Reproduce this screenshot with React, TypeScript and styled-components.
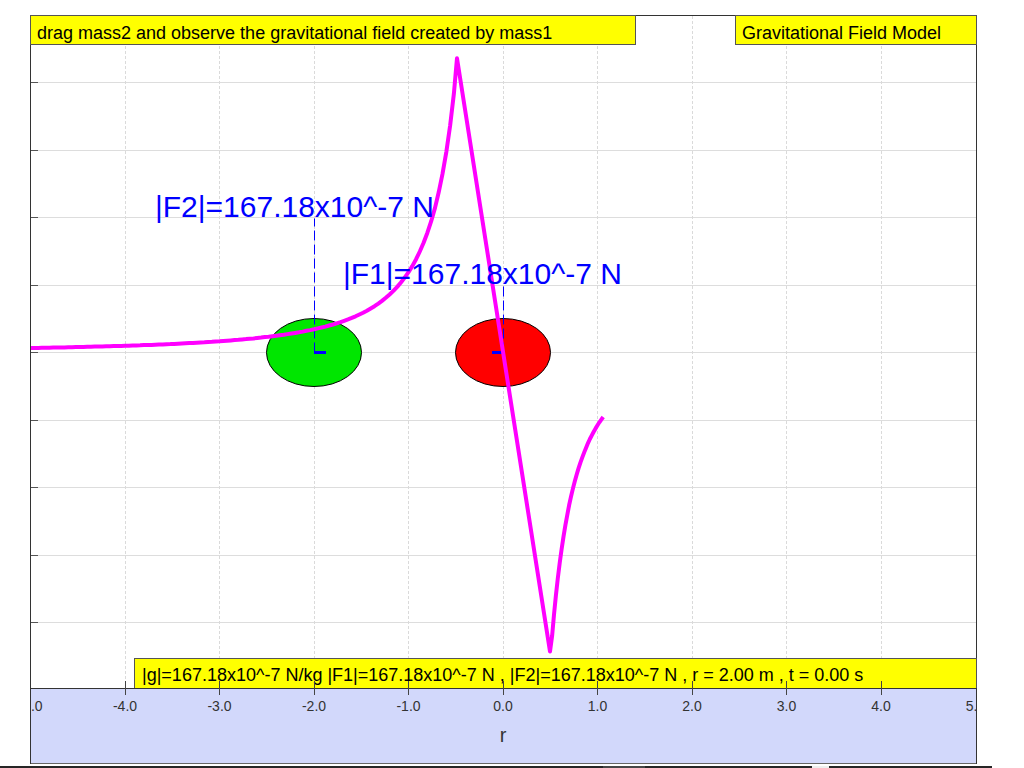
import React from "react";
import styled, { createGlobalStyle } from "styled-components";

const GlobalStyle = createGlobalStyle`
  html, body { margin: 0; padding: 0; background: #ffffff; }
  body { font-family: "Liberation Sans", Arial, sans-serif; }
`;

const PLOT_W = 945;
const PLOT_H = 672;
const X = (v: number) => 472 + 94.5 * v;
const Y = (v: number) => 336.5 - 67.5 * v;

const Page = styled.div`
  display: flex;
  flex-direction: column;
  width: 1024px;
`;

const Stage = styled.div`
  padding: 15px 0 0 30px;
`;

const Frame = styled.div`
  position: relative;
  width: ${PLOT_W}px;
  border: 1px solid #333;
  border-bottom: none;
  display: flex;
  flex-direction: column;
`;

const PlotArea = styled.div`
  position: relative;
  height: ${PLOT_H}px;
`;

const PlotSvg = styled.svg`
  display: block;
  width: ${PLOT_W}px;
  height: ${PLOT_H}px;
  overflow: hidden;
`;

const TopBar = styled.div`
  position: absolute;
  top: -1px;
  left: -1px;
  right: -1px;
  display: flex;
  justify-content: space-between;
`;

const Label = styled.div<{ $w?: number; $pad: number }>`
  box-sizing: border-box;
  ${(p) => (p.$w ? `width: ${p.$w}px;` : "")}
  height: 30px;
  background: #ffff00;
  border: 1px solid #555;
  padding: 7px 0 0 ${(p) => p.$pad}px;
  font-size: 18px;
  line-height: 20px;
  color: #000;
  white-space: nowrap;
  overflow: hidden;
`;

const StatusLabel = styled(Label)`
  position: absolute;
  left: 103px;
  right: -1px;
  bottom: 0;
  border-bottom: none;
  padding-top: 6px;
`;

const TickOverlay = styled.svg`
  position: absolute;
  left: 0;
  top: 665px;
  width: ${PLOT_W}px;
  height: 14px;
  pointer-events: none;
`;

const AxisPanel = styled.div`
  height: 74px;
  background: #d2d8fb;
  border-top: 1px solid #333;
  border-bottom: 1px solid #666;
`;

const AxisSvg = styled.svg`
  display: block;
  width: ${PLOT_W}px;
  height: 74px;
  overflow: hidden;
`;

const BottomBar = styled.div`
  margin-top: 2px;
  width: 992px;
  height: 2px;
  display: flex;
`;

const BarSeg = styled.div<{ $w: number; $c: string }>`
  width: ${(p) => p.$w}px;
  height: 100%;
  background: ${(p) => p.$c};
`;

function curvePoints(): string {
  const pts: string[] = [];
  const A = 1.19;
  const P = 1.79;
  for (let i = 0; ; i++) {
    const x = -5 + i * 0.04;
    if (x > -0.487) break;
    pts.push(`${X(x).toFixed(1)},${Y(A / Math.pow(-x, P)).toFixed(1)}`);
  }
  pts.push(`${X(-0.487).toFixed(1)},${Y(4.36).toFixed(1)}`);
  pts.push(`${X(0.497).toFixed(1)},${Y(-4.43).toFixed(1)}`);
  const AR = 1.078;
  const PR = 2.08;
  for (let i = 0; ; i++) {
    const x = 0.52 + i * 0.02;
    if (x > 1.061) break;
    pts.push(`${X(x).toFixed(1)},${Y(-AR / Math.pow(x, PR)).toFixed(1)}`);
  }
  return pts.join(" ");
}

const gridX = [-4, -3, -2, -1, 0, 1, 2, 3, 4];
const gridY = [4, 3, 2, 1, 0, -1, -2, -3, -4];
const tickVals = [-5, -4, -3, -2, -1, 0, 1, 2, 3, 4, 5];

export default function App() {
  const gx = X(-2);
  const rx = X(0);
  const cy = Y(0);
  return (
    <Page>
      <GlobalStyle />
      <Stage>
        <Frame>
          <PlotArea>
            <PlotSvg viewBox={`0 0 ${PLOT_W} ${PLOT_H}`}>
              {gridY.map((v) => (
                <line key={`h${v}`} x1={0} x2={PLOT_W} y1={Math.floor(Y(v)) + 0.5} y2={Math.floor(Y(v)) + 0.5} stroke="#dddddd" strokeWidth={1} />
              ))}
              {gridX.map((v) => (
                <line key={`v${v}`} x1={Math.floor(X(v)) + 0.5} x2={Math.floor(X(v)) + 0.5} y1={0} y2={PLOT_H} stroke="#dadada" strokeWidth={1} strokeDasharray="3 2" />
              ))}
              {gridY.map((v) => (
                <line key={`t${v}`} x1={0} x2={7} y1={Math.floor(Y(v)) + 0.5} y2={Math.floor(Y(v)) + 0.5} stroke="#555" strokeWidth={1} />
              ))}
              <ellipse cx={gx} cy={cy} rx={47.5} ry={34} fill="#00e600" stroke="#000" strokeWidth={1} />
              <ellipse cx={rx} cy={cy} rx={47.5} ry={34} fill="#ff0000" stroke="#000" strokeWidth={1} />
              <line x1={Math.floor(gx) + 0.5} x2={Math.floor(gx) + 0.5} y1={cy} y2={Y(2) + 1} stroke="#0000ff" strokeWidth={1} strokeDasharray="10 4" />
              <line x1={Math.floor(rx) + 0.5} x2={Math.floor(rx) + 0.5} y1={cy} y2={Y(1) + 1} stroke="#0000ff" strokeWidth={1} strokeDasharray="10 4" />
              <line x1={gx} x2={gx + 12} y1={cy} y2={cy} stroke="#0000ff" strokeWidth={3} />
              <line x1={rx - 11} x2={rx} y1={cy} y2={cy} stroke="#0000ff" strokeWidth={3} />
              <polyline points={curvePoints()} fill="none" stroke="#ff00ff" strokeWidth={4} strokeLinejoin="round" />
              <text x={124} y={201} fill="#0000ff" fontSize={30} fontFamily="Liberation Sans, Arial, sans-serif">
                |F2|=167.18x10^-7 N
              </text>
              <text x={312} y={268} fill="#0000ff" fontSize={30} fontFamily="Liberation Sans, Arial, sans-serif">
                |F1|=167.18x10^-7 N
              </text>
            </PlotSvg>
            <TopBar>
              <Label $w={606} $pad={6}>drag mass2 and observe the gravitational field created by mass1</Label>
              <Label $w={242} $pad={6}>Gravitational Field Model</Label>
            </TopBar>
            <StatusLabel $pad={7}>
              |g|=167.18x10^-7 N/kg |F1|=167.18x10^-7 N , |F2|=167.18x10^-7 N , r = 2.00 m , t = 0.00 s
            </StatusLabel>
          </PlotArea>
          <AxisPanel>
            <AxisSvg viewBox={`0 0 ${PLOT_W} 74`}>
              {tickVals.map((v) => (
                <text key={v} x={X(v)} y={22} textAnchor="middle" fill="#333" fontSize={14} fontFamily="Liberation Sans, Arial, sans-serif">
                  {v.toFixed(1)}
                </text>
              ))}
              <text x={X(0)} y={53} textAnchor="middle" fill="#333" fontSize={20} fontFamily="Liberation Sans, Arial, sans-serif">
                r
              </text>
            </AxisSvg>
          </AxisPanel>
          <TickOverlay viewBox={`0 0 ${PLOT_W} 14`}>
            {gridX.map((v) => (
              <line key={v} x1={Math.floor(X(v)) + 0.5} x2={Math.floor(X(v)) + 0.5} y1={0} y2={14} stroke="#444" strokeWidth={1} />
            ))}
          </TickOverlay>
        </Frame>
      </Stage>
      <BottomBar>
        <BarSeg $w={603} $c="#262626" />
        <BarSeg $w={42} $c="#474747" />
        <BarSeg $w={167} $c="#262626" />
        <BarSeg $w={17} $c="#eeeeee" />
        <BarSeg $w={163} $c="#262626" />
      </BottomBar>
    </Page>
  );
}
